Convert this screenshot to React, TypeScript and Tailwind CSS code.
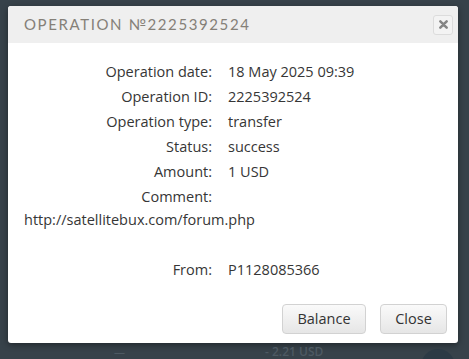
import React from 'react';

const rows = [
  { label: 'Operation date:', value: '18 May 2025 09:39' },
  { label: 'Operation ID:', value: '2225392524' },
  { label: 'Operation type:', value: 'transfer' },
  { label: 'Status:', value: 'success' },
  { label: 'Amount:', value: '1 USD' },
  { label: 'Comment:', value: '' },
];

const App: React.FC = () => {
  return (
    <div className="w-[469px] h-[359px] overflow-hidden bg-[#37424a] flex flex-col" style={{ fontFamily: '"Open Sans", "Liberation Sans", sans-serif' }}>
      <div className="ml-[8px] mt-[6px] w-[450px] h-[337px] shrink-0 bg-white rounded-[3px] shadow-[0_2px_6px_rgba(0,0,0,0.4)] flex flex-col overflow-hidden">
        <div className="h-[37px] bg-[#efefef] flex items-center justify-between pl-[16px] pr-[5px]">
          <h1 className="text-[15px] tracking-[1.6px] text-[#858078] uppercase" style={{ fontFamily: 'Lato, "Open Sans", sans-serif' }}>
            Operation №2225392524
          </h1>
          <button className="w-[20px] h-[20px] flex items-center justify-center rounded-[3px] border border-[#dcdcdc] bg-[#f3f3f3]">
            <svg width="9" height="9" viewBox="0 0 10 10">
              <path d="M1.5 1.5 L8.5 8.5 M8.5 1.5 L1.5 8.5" stroke="#858585" strokeWidth="2.8" strokeLinecap="round" />
            </svg>
          </button>
        </div>

        <div className="pt-[16px] text-[14.5px] text-[#363636] leading-[25px]">
          {rows.map(row => (
            <div key={row.label} className="flex">
              <span className="w-[204px] text-right">{row.label}</span>
              <span className="ml-[16px]">{row.value}</span>
            </div>
          ))}
          <div className="pl-[16px] -mt-[2px]">http://satellitebux.com/forum.php</div>
          <div className="h-[25px]" />
          <div className="flex">
            <span className="w-[204px] text-right">From:</span>
            <span className="ml-[16px]">P1128085366</span>
          </div>
        </div>

        <div className="mt-auto mb-[9px] flex justify-end gap-[14px] pr-[11px]">
          <button className="h-[30px] w-[84px] rounded-[4px] border border-[#d2d2d2] bg-gradient-to-b from-[#fafafa] to-[#e6e6e6] text-[14.5px] text-[#333]">
            Balance
          </button>
          <button className="h-[30px] w-[67px] rounded-[4px] border border-[#d2d2d2] bg-gradient-to-b from-[#fafafa] to-[#e6e6e6] text-[14.5px] text-[#333]">
            Close
          </button>
        </div>
      </div>

      <div className="flex items-start mt-[2px] h-[14px] leading-[13px]">
        <span className="ml-[114px] text-[#4d5962] text-[11px]">—</span>
        <span className="ml-[140px] text-[#4d5962] text-[12px] font-semibold">- 2.21 USD</span>
        <span className="ml-[98px] w-[34px] h-[34px] mt-[4px] rounded-full bg-[#2c3a45]" />
      </div>
    </div>
  );
};

export default App;
